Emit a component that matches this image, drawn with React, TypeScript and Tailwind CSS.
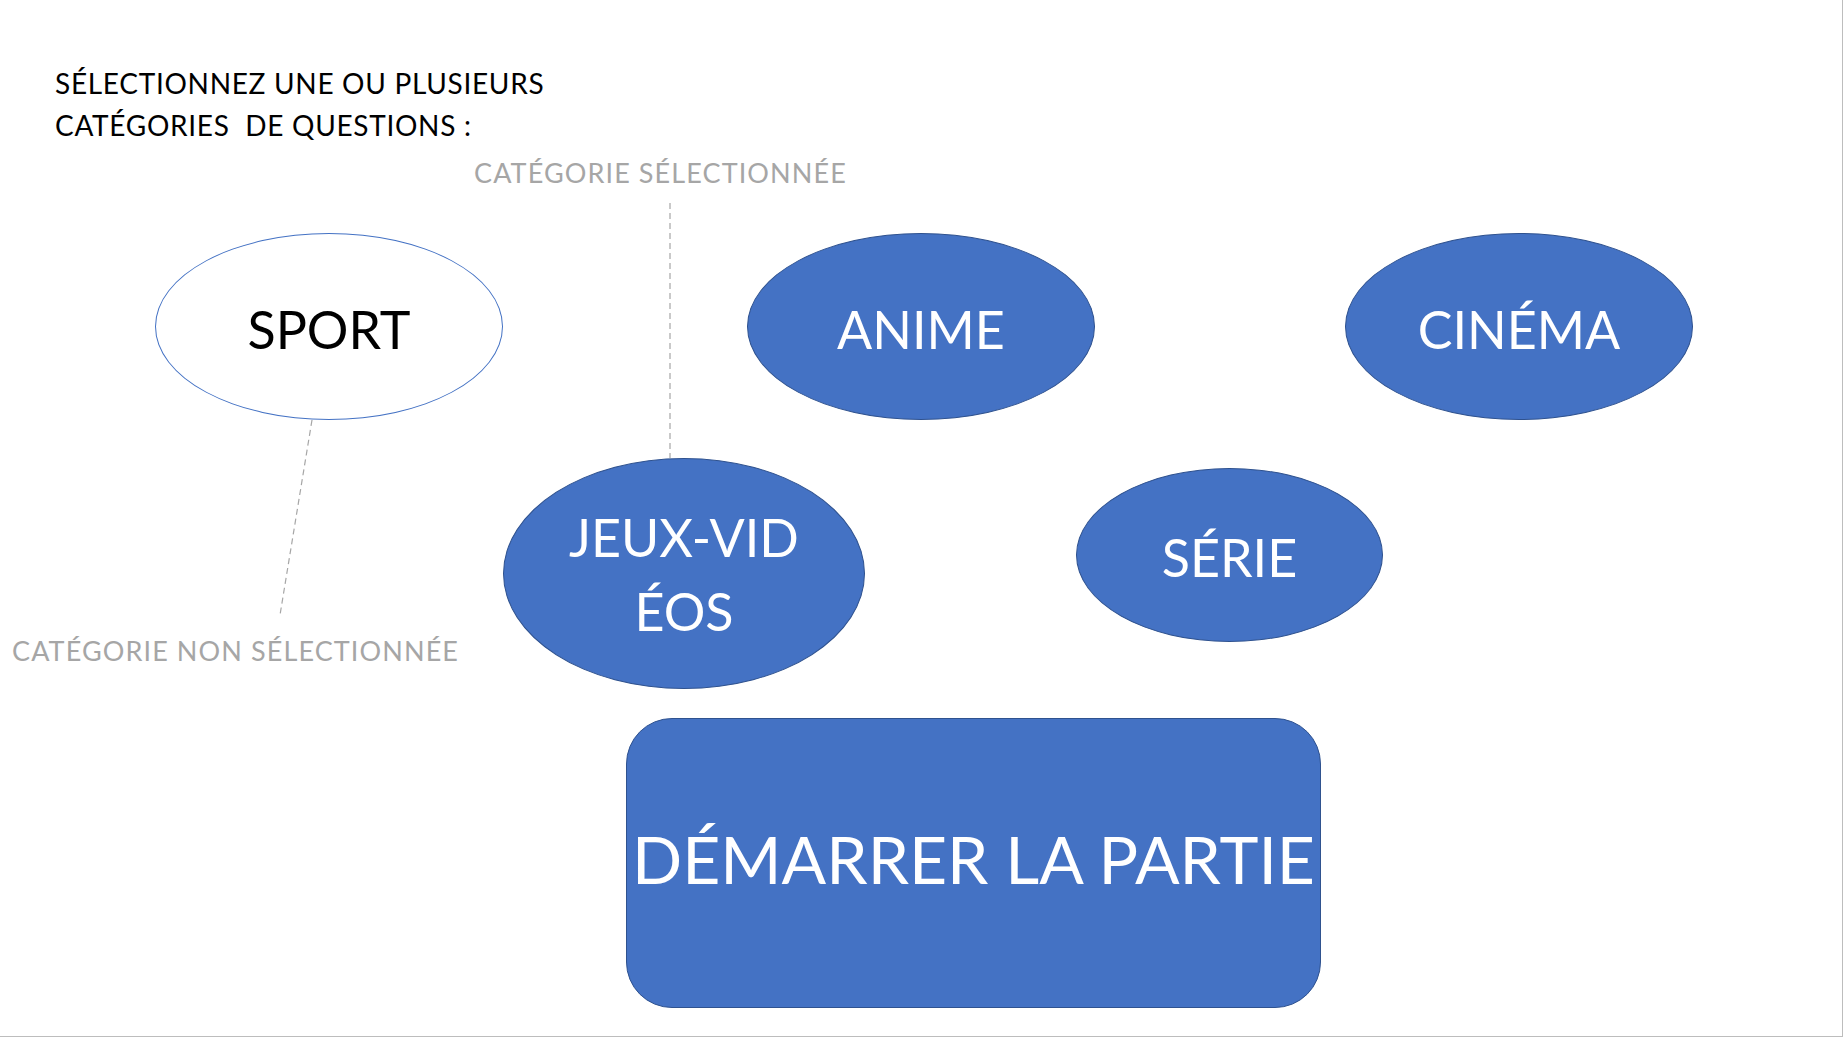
const bubble = "shrink-0 flex flex-col items-center justify-center rounded-[50%] text-[52px] leading-[74px] text-center";
const filled = "bg-[#4472c4] border-[1.5px] border-[#2f528f] text-white";
const note = "absolute text-[27px] leading-[27px] tracking-[1.1px] text-[#a6a6a6] whitespace-nowrap";

export default function App() {
  return (
    <div className="w-[1846px] h-[1038px] bg-white font-['Lato','Open_Sans',sans-serif]">
      <div className="w-[1843px] h-[1037px] flex flex-col bg-white border-r border-b border-[#bdbdbd]">
        {/* Title */}
        <div className="h-[150px] pt-[63px] pl-[55px] text-[28px] leading-[41.7px] tracking-[0.7px] text-black">
          <div>SÉLECTIONNEZ UNE OU PLUSIEURS</div>
          <div className="whitespace-pre">CATÉGORIES  DE QUESTIONS :</div>
        </div>

        {/* Categories */}
        <div className="relative flex flex-col pt-[83px]">
          {/* annotations */}
          <svg className="absolute inset-0 pointer-events-none" width="1843" height="568">
            <line x1="670" y1="53" x2="670" y2="308" stroke="#a6a6a6" strokeWidth="1.2" strokeDasharray="6 4" />
            <line x1="312" y1="270" x2="280" y2="465" stroke="#a6a6a6" strokeWidth="1.2" strokeDasharray="6 4" />
          </svg>
          <div className={`${note} left-[474px] top-[9px]`}>CATÉGORIE SÉLECTIONNÉE</div>
          <div className={`${note} left-[12px] top-[487px]`}>CATÉGORIE NON SÉLECTIONNÉE</div>

          <div className="flex pl-[155px]">
            <button className={`${bubble} w-[348px] h-[187px] bg-white border-[1.5px] border-[#4472c4] text-black pt-[4px]`}>
              SPORT
            </button>
            <button className={`${bubble} ${filled} ml-[244px] w-[348px] h-[187px] pt-[4px]`}>
              ANIME
            </button>
            <button className={`${bubble} ${filled} ml-[250px] w-[348px] h-[187px] pt-[4px]`}>
              CINÉMA
            </button>
          </div>

          <div className="flex items-start pl-[503px] mt-[38px]">
            <button className={`${bubble} ${filled} w-[362px] h-[231px]`}>
              <span>JEUX-VID</span>
              <span>ÉOS</span>
            </button>
            <button className={`${bubble} ${filled} ml-[211px] mt-[10px] w-[307px] h-[174px] pt-[4px]`}>
              SÉRIE
            </button>
          </div>
        </div>

        {/* Start button */}
        <div className="pl-[626px] pt-[29px]">
          <button className="w-[695px] h-[290px] flex items-center justify-center rounded-[46px] bg-[#4472c4] border-[1.5px] border-[#2f528f] text-white text-[66px] whitespace-nowrap pb-[10px]">
            DÉMARRER LA PARTIE
          </button>
        </div>
      </div>
    </div>
  );
}
